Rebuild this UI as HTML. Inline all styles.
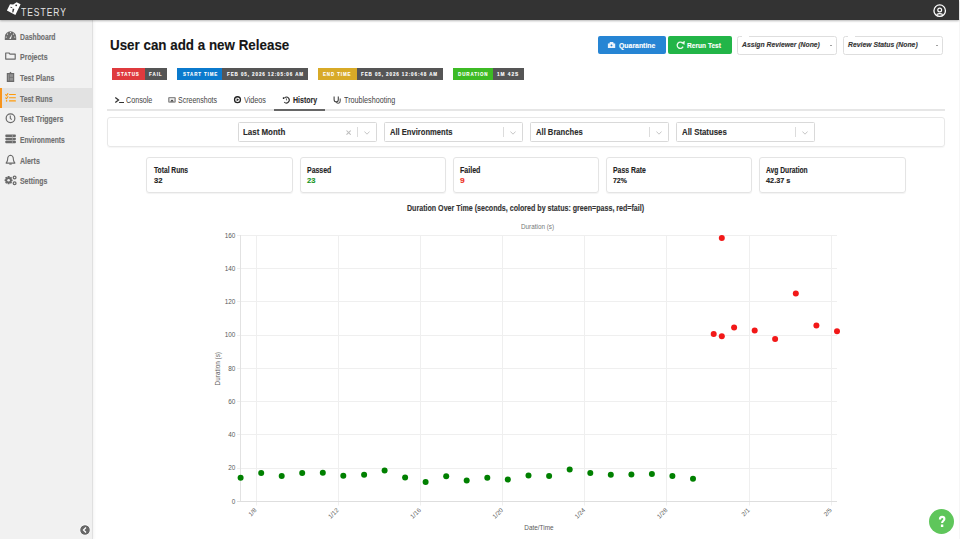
<!DOCTYPE html>
<html><head><meta charset="utf-8">
<style>
*{box-sizing:border-box;margin:0;padding:0}
html,body{width:960px;height:539px;overflow:hidden;background:#fff;font-family:"Liberation Sans",sans-serif;color:#222}
.abs{position:absolute}
.tx{position:absolute;white-space:nowrap;transform-origin:0 0;z-index:4}
#hdr{position:absolute;left:0;top:0;width:959px;height:19.6px;background:#333;box-shadow:0 1px 2px rgba(0,0,0,.28);z-index:2}
#side{position:absolute;left:0;top:19.6px;width:93px;height:520px;background:#f1f1f1;border-right:1px solid #e0e0e0;box-shadow:1px 0 3px rgba(0,0,0,.05)}
.bd{position:absolute;top:67.9px;height:12.2px}
.card{position:absolute;top:157px;width:146.6px;height:36px;border:1px solid #e4e4e4;border-radius:3px;box-shadow:0 1px 1px rgba(0,0,0,.05)}
.sel{position:absolute;top:122px;width:139px;height:20px;border:1px solid #d9d9d9;border-radius:1.5px;background:#fff}
.sel i{position:absolute;top:4.2px;left:118px;width:1px;height:9.6px;background:#dcdcdc}
.sel svg{position:absolute}
.btn{position:absolute;top:36px;height:17.8px;border-radius:2px}
.dd{position:absolute;top:36px;height:18.6px;border:1px solid #dedede;border-radius:2.5px}
.dd b{position:absolute;top:-1px;left:4px;width:7px;height:1px;background:#fff}
.dd s{position:absolute;top:7.5px;width:2.3px;height:1.5px;background:#a0a0a0}
</style></head><body>
<div id="hdr">
  <svg class="abs" style="left:0;top:0" width="24" height="19" viewBox="0 0 24 19"><path d="M6.9 10.6 L10 4.2 L13.2 4.6 L16.6 2.2 L20.6 4.3 L15.4 14.9 Z" fill="#fff"/><path d="M12.7 8.4 L14.3 8.9 L13.3 12.6 L12.2 12.2 Z" fill="#333"/><circle cx="16.2" cy="5.3" r="0.9" fill="#333"/><path d="M10.6 6.7 L12.4 7.2 L11.9 7.9 L10.3 7.5 Z" fill="#333"/></svg>
  <svg class="abs" style="left:929px;top:1px" width="20" height="18" viewBox="0 0 20 18"><circle cx="10.7" cy="9.7" r="5.75" fill="none" stroke="#fff" stroke-width="1.3"/><circle cx="10.7" cy="9" r="1.9" fill="none" stroke="#fff" stroke-width="1.2"/><path d="M7.7 13.6 Q10.7 11.6 13.7 13.6" fill="none" stroke="#fff" stroke-width="1.2"/></svg>
</div>
<div class="abs" style="left:959px;top:19px;width:1px;height:520px;background:#f6f6f6"></div>
<div id="side">
  <div class="abs" style="left:0;top:68px;width:92px;height:20px;background:#e2e2e2"></div>
  <div class="abs" style="left:0;top:68px;width:2px;height:20px;background:#f7941d"></div>
</div>
<svg class="abs" style="left:0;top:19px;z-index:3" width="20" height="170" viewBox="0 19 20 170">
 <g fill="#6a6a6a">
  <path d="M4.8 39.9 L4.8 37 A5.7 5.7 0 0 1 16.2 37 L16.2 39.9 Z"/>
 </g>
 <g fill="#f1f1f1">
  <path d="M9.2 38.7 L12.3 33.9 L10.9 39 Z"/>
  <circle cx="10.5" cy="32.6" r="0.6"/><circle cx="7.5" cy="34.1" r="0.6"/><circle cx="13.5" cy="34.1" r="0.6"/><circle cx="6.2" cy="37.1" r="0.6"/><circle cx="14.8" cy="37.1" r="0.6"/>
 </g>
 <path d="M5.7 53 L9 53 L10 54.1 L15.2 54.1 L15.2 59.1 L5.7 59.1 Z" fill="none" stroke="#6a6a6a" stroke-width="1.2" stroke-linejoin="round"/>
 <path d="M6.8 73 L9.3 73 L10.5 71.8 L11.7 73 L14.2 73 L14.2 81.9 L6.8 81.9 Z" fill="#6a6a6a"/>
 <rect x="7.9" y="74.2" width="5.2" height="6.5" fill="#929292"/><path d="M9.4 74.2 L9.4 80.7 M9.4 77.4 L13.1 77.4" stroke="#6a6a6a" stroke-width="0.7"/>
 <g stroke="#ff9a0a" stroke-width="1.1" fill="none" stroke-linecap="round">
  <path d="M5.6 94.7 L6.5 95.6 L7.9 93.6 M5.6 97.8 L6.5 98.7 L7.9 96.7"/>
  <path d="M9.5 94.5 L15.4 94.5 M9.5 97.7 L15.4 97.7 M9.5 100.9 L15.4 100.9"/>
 </g>
 <circle cx="6.6" cy="100.9" r="0.8" fill="#ff9a0a"/>
 <circle cx="10.5" cy="118.2" r="4.35" fill="none" stroke="#6a6a6a" stroke-width="1.2"/>
 <path d="M10.3 115.6 L10.3 118.3 L11.7 119.7" fill="none" stroke="#6a6a6a" stroke-width="1.1"/>
 <g fill="#6a6a6a"><rect x="5.3" y="134.6" width="10.6" height="2.45" rx="0.8"/><rect x="5.3" y="137.7" width="10.6" height="2.45" rx="0.8"/><rect x="5.3" y="140.8" width="10.6" height="2.45" rx="0.8"/></g>
 <path d="M12.4 134.6 L12.4 143.2" stroke="#aaa" stroke-width="0.7"/>
 <path d="M10.5 155.3 C8 155.6 7.6 157.6 7.6 159.5 C7.6 161.3 6.6 162.3 6.1 163.1 L14.9 163.1 C14.4 162.3 13.4 161.3 13.4 159.5 C13.4 157.6 13 155.6 10.5 155.3 Z" fill="none" stroke="#6a6a6a" stroke-width="1.1" stroke-linejoin="round"/>
 <path d="M9.3 164.1 L11.7 164.1" stroke="#6a6a6a" stroke-width="1.1"/>
 <g transform="translate(8.6 180.2)"><path d="M-0.9 -4.1 L0.9 -4.1 L1.3 -2.8 L2.5 -3.4 L3.5 -2.2 L2.7 -1.1 L4 -0.5 L4 0.9 L2.8 1.3 L3.4 2.5 L2.3 3.5 L1.2 2.8 L0.8 4.1 L-0.8 4.1 L-1.2 2.8 L-2.4 3.5 L-3.5 2.4 L-2.8 1.2 L-4 0.8 L-4 -0.8 L-2.8 -1.2 L-3.5 -2.4 L-2.4 -3.5 L-1.2 -2.8 Z" fill="#6a6a6a"/><circle r="1.3" fill="#f1f1f1"/></g>
 <circle cx="14.6" cy="177.5" r="1.4" fill="none" stroke="#6a6a6a" stroke-width="1.25"/>
 <circle cx="14.6" cy="183.3" r="1.4" fill="none" stroke="#6a6a6a" stroke-width="1.25"/>
</svg>
<svg class="abs" style="left:110px;top:93px;z-index:3" width="240" height="14" viewBox="110 93 240 14">
 <path d="M115.3 97.4 L118.5 99.9 L115.3 102.4" fill="none" stroke="#333" stroke-width="1.3"/>
 <path d="M119.1 102.5 L124 102.5" stroke="#333" stroke-width="1"/>
 <rect x="168.1" y="97" width="7.7" height="5.7" rx="1.2" fill="#8c8c8c"/>
 <rect x="169.5" y="98.2" width="4.9" height="3.3" fill="#eee"/>
 <path d="M170.2 101.5 L172 99.4 L173.8 101.5 Z" fill="#333"/>
 <circle cx="237.5" cy="99.7" r="2.95" fill="none" stroke="#222" stroke-width="1.3"/>
 <path d="M236.6 98.2 L239.1 99.7 L236.6 101.2 Z" fill="#222"/>
 <path d="M284.6 97.7 A2.9 2.9 0 1 1 284.2 102" fill="none" stroke="#333" stroke-width="1.1"/>
 <circle cx="283.6" cy="98.1" r="0.9" fill="#111"/>
 <path d="M286.3 98.3 L286.6 100.4" stroke="#555" stroke-width="0.9"/>
 <path d="M334.1 96.6 L334.1 99.4 C334.1 101 335.3 101.9 336.3 101.9 C337.3 101.9 338.3 101 338.3 99.4 L338.3 96.6" fill="none" stroke="#444" stroke-width="1.1"/>
 <path d="M336.3 101.9 C336.6 103 337.3 103.4 338.3 103.3 C339.6 103.2 340.2 102.3 340.2 101 L340.2 98.5" fill="none" stroke="#555" stroke-width="1.1"/>
</svg>
<svg class="abs" style="left:600px;top:36px;z-index:3" width="90" height="18" viewBox="600 36 90 18">
 <path d="M607.9 43.4 L609.4 43.4 L609.9 42 L613.2 42 L613.7 43.4 L615.2 43.4 L615.2 48 L607.9 48 Z" fill="#eaf3fb"/>
 <path d="M611.5 44.3 L612.6 45.4 L611.5 46.5 L610.4 45.4 Z" fill="#2685d4"/>
 <path d="M682.6 43.2 A3.1 3.1 0 1 0 683.1 46.6" fill="none" stroke="#eafaee" stroke-width="1.3"/>
 <path d="M681 42.6 L684.9 40.9 L684.4 45 Z" fill="#eafaee"/>
</svg>
<svg class="abs" style="left:79px;top:524px" width="12" height="12" viewBox="0 0 12 12"><circle cx="6" cy="6" r="5.3" fill="#666" stroke="#fff" stroke-width="1"/><path d="M7 3.5 L4.5 6 L7 8.5" fill="none" stroke="#fff" stroke-width="1.3"/></svg>


<div class="bd" style="left:112.4px;width:32.3px;background:#df3a3e"></div>
<div class="bd" style="left:144.7px;width:22.3px;background:#555"></div>
<div class="bd" style="left:177.3px;width:45px;background:#0b7acd"></div>
<div class="bd" style="left:222.3px;width:85.5px;background:#555"></div>
<div class="bd" style="left:318.2px;width:38.5px;background:#d8aa27"></div>
<div class="bd" style="left:356.7px;width:86px;background:#555"></div>
<div class="bd" style="left:453.1px;width:39.8px;background:#3dbb25"></div>
<div class="bd" style="left:492.9px;width:30.9px;background:#555"></div>

<div class="btn" style="left:598.3px;width:67.5px;background:#2685d4"></div>
<div class="btn" style="left:667.7px;width:64.2px;background:#22b548"></div>
<div class="dd" style="left:736.6px;width:100px"><b></b><s style="left:92.5px"></s></div>
<div class="dd" style="left:842.5px;width:100.3px"><b></b><s style="left:92.3px"></s></div>

<div class="abs" style="left:107px;top:109px;width:838px;height:2px;background:#e6e6e6"></div>
<div class="abs" style="left:274px;top:109px;width:51px;height:2px;background:#666"></div>

<div class="abs" style="left:107px;top:117.3px;width:838.3px;height:30px;border:1px solid #e8e8e8;border-radius:3px;box-shadow:0 1px 1px rgba(0,0,0,.04)"></div>
<div class="sel" style="left:238px"><i></i><svg style="left:125px;top:7.6px" width="6" height="4" viewBox="0 0 6 4"><path d="M0.4 0.5 L3 3.2 L5.6 0.5" fill="none" stroke="#c6c6c6" stroke-width="1"/></svg><svg style="left:106.8px;top:6.6px" width="5.2" height="5.2" viewBox="0 0 5.2 5.2"><path d="M0.5 0.5 L4.7 4.7 M4.7 0.5 L0.5 4.7" stroke="#bdbdbd" stroke-width="1.05"/></svg></div>
<div class="sel" style="left:384px"><i></i><svg style="left:125px;top:7.6px" width="6" height="4" viewBox="0 0 6 4"><path d="M0.4 0.5 L3 3.2 L5.6 0.5" fill="none" stroke="#c6c6c6" stroke-width="1"/></svg></div>
<div class="sel" style="left:530px"><i></i><svg style="left:125px;top:7.6px" width="6" height="4" viewBox="0 0 6 4"><path d="M0.4 0.5 L3 3.2 L5.6 0.5" fill="none" stroke="#c6c6c6" stroke-width="1"/></svg></div>
<div class="sel" style="left:676px"><i></i><svg style="left:125px;top:7.6px" width="6" height="4" viewBox="0 0 6 4"><path d="M0.4 0.5 L3 3.2 L5.6 0.5" fill="none" stroke="#c6c6c6" stroke-width="1"/></svg></div>

<div class="card" style="left:146.4px"></div>
<div class="card" style="left:299.5px"></div>
<div class="card" style="left:452.6px"></div>
<div class="card" style="left:605.8px"></div>
<div class="card" style="left:759.0px"></div>

<!--CHART-->
<svg class="abs" style="left:0;top:0" width="960" height="539" viewBox="0 0 960 539">
<line x1="237" y1="501.5" x2="837.0" y2="501.5" stroke="#efefef" stroke-width="1"/>
<line x1="237" y1="468.5" x2="837.0" y2="468.5" stroke="#efefef" stroke-width="1"/>
<line x1="237" y1="434.5" x2="837.0" y2="434.5" stroke="#efefef" stroke-width="1"/>
<line x1="237" y1="401.5" x2="837.0" y2="401.5" stroke="#efefef" stroke-width="1"/>
<line x1="237" y1="368.5" x2="837.0" y2="368.5" stroke="#efefef" stroke-width="1"/>
<line x1="237" y1="335.5" x2="837.0" y2="335.5" stroke="#efefef" stroke-width="1"/>
<line x1="237" y1="301.5" x2="837.0" y2="301.5" stroke="#efefef" stroke-width="1"/>
<line x1="237" y1="268.5" x2="837.0" y2="268.5" stroke="#efefef" stroke-width="1"/>
<line x1="237" y1="235.5" x2="837.0" y2="235.5" stroke="#efefef" stroke-width="1"/>
<line x1="256.5" y1="235.4" x2="256.5" y2="505.5" stroke="#efefef" stroke-width="1"/>
<line x1="338.5" y1="235.4" x2="338.5" y2="505.5" stroke="#efefef" stroke-width="1"/>
<line x1="420.5" y1="235.4" x2="420.5" y2="505.5" stroke="#efefef" stroke-width="1"/>
<line x1="502.5" y1="235.4" x2="502.5" y2="505.5" stroke="#efefef" stroke-width="1"/>
<line x1="584.5" y1="235.4" x2="584.5" y2="505.5" stroke="#efefef" stroke-width="1"/>
<line x1="666.5" y1="235.4" x2="666.5" y2="505.5" stroke="#efefef" stroke-width="1"/>
<line x1="749.5" y1="235.4" x2="749.5" y2="505.5" stroke="#efefef" stroke-width="1"/>
<line x1="831.5" y1="235.4" x2="831.5" y2="505.5" stroke="#efefef" stroke-width="1"/>
<line x1="240.5" y1="235" x2="240.5" y2="501.5" stroke="#e2e2e2" stroke-width="1"/>
<line x1="237" y1="501.5" x2="837.0" y2="501.5" stroke="#dedede" stroke-width="1"/>
<text x="235.3" y="503.60" text-anchor="end" font-size="6.4" fill="#5a5a5a">0</text>
<text x="235.3" y="470.36" text-anchor="end" font-size="6.4" fill="#5a5a5a">20</text>
<text x="235.3" y="437.13" text-anchor="end" font-size="6.4" fill="#5a5a5a">40</text>
<text x="235.3" y="403.89" text-anchor="end" font-size="6.4" fill="#5a5a5a">60</text>
<text x="235.3" y="370.65" text-anchor="end" font-size="6.4" fill="#5a5a5a">80</text>
<text x="235.3" y="337.41" text-anchor="end" font-size="6.4" fill="#5a5a5a">100</text>
<text x="235.3" y="304.18" text-anchor="end" font-size="6.4" fill="#5a5a5a">120</text>
<text x="235.3" y="270.94" text-anchor="end" font-size="6.4" fill="#5a5a5a">140</text>
<text x="235.3" y="237.70" text-anchor="end" font-size="6.4" fill="#5a5a5a">160</text>
<text transform="translate(257.00,510.6) rotate(-45)" text-anchor="end" font-size="6.2" fill="#5a5a5a">1/8</text>
<text transform="translate(339.18,510.6) rotate(-45)" text-anchor="end" font-size="6.2" fill="#5a5a5a">1/12</text>
<text transform="translate(421.36,510.6) rotate(-45)" text-anchor="end" font-size="6.2" fill="#5a5a5a">1/16</text>
<text transform="translate(503.54,510.6) rotate(-45)" text-anchor="end" font-size="6.2" fill="#5a5a5a">1/20</text>
<text transform="translate(585.72,510.6) rotate(-45)" text-anchor="end" font-size="6.2" fill="#5a5a5a">1/24</text>
<text transform="translate(667.90,510.6) rotate(-45)" text-anchor="end" font-size="6.2" fill="#5a5a5a">1/28</text>
<text transform="translate(750.08,510.6) rotate(-45)" text-anchor="end" font-size="6.2" fill="#5a5a5a">2/1</text>
<text transform="translate(832.26,510.6) rotate(-45)" text-anchor="end" font-size="6.2" fill="#5a5a5a">2/5</text>
<text transform="translate(220.3,368.7) rotate(-90)" text-anchor="middle" font-size="6.4" fill="#5a5a5a">Duration (s)</text>
<text x="538.9" y="530" text-anchor="middle" font-size="6.4" fill="#5a5a5a">Date/Time</text>
<circle cx="240.6" cy="477.7" r="3" fill="#008000"/>
<circle cx="261.2" cy="472.9" r="3" fill="#008000"/>
<circle cx="281.7" cy="476.1" r="3" fill="#008000"/>
<circle cx="302.2" cy="473.1" r="3" fill="#008000"/>
<circle cx="322.8" cy="472.7" r="3" fill="#008000"/>
<circle cx="343.3" cy="475.7" r="3" fill="#008000"/>
<circle cx="364.1" cy="474.8" r="3" fill="#008000"/>
<circle cx="384.6" cy="470.6" r="3" fill="#008000"/>
<circle cx="405.1" cy="477.5" r="3" fill="#008000"/>
<circle cx="425.6" cy="481.9" r="3" fill="#008000"/>
<circle cx="446.2" cy="476.3" r="3" fill="#008000"/>
<circle cx="466.7" cy="480.5" r="3" fill="#008000"/>
<circle cx="487.3" cy="477.8" r="3" fill="#008000"/>
<circle cx="507.8" cy="479.6" r="3" fill="#008000"/>
<circle cx="528.5" cy="475.5" r="3" fill="#008000"/>
<circle cx="549.1" cy="475.9" r="3" fill="#008000"/>
<circle cx="569.7" cy="469.5" r="3" fill="#008000"/>
<circle cx="590.3" cy="472.9" r="3" fill="#008000"/>
<circle cx="610.8" cy="474.7" r="3" fill="#008000"/>
<circle cx="631.4" cy="474.5" r="3" fill="#008000"/>
<circle cx="651.9" cy="474.1" r="3" fill="#008000"/>
<circle cx="672.4" cy="476.1" r="3" fill="#008000"/>
<circle cx="693.0" cy="478.7" r="3" fill="#008000"/>
<circle cx="713.7" cy="334.0" r="3" fill="#f21818"/>
<circle cx="721.8" cy="336.3" r="3" fill="#f21818"/>
<circle cx="721.8" cy="238.0" r="3" fill="#f21818"/>
<circle cx="734.1" cy="327.5" r="3" fill="#f21818"/>
<circle cx="754.7" cy="330.5" r="3" fill="#f21818"/>
<circle cx="775.1" cy="339.1" r="3" fill="#f21818"/>
<circle cx="795.8" cy="293.4" r="3" fill="#f21818"/>
<circle cx="816.4" cy="325.4" r="3" fill="#f21818"/>
<circle cx="837.0" cy="331.2" r="3" fill="#f21818"/>
</svg>
<!--/CHART-->

<svg class="abs" style="left:929.3px;top:508.5px" width="25" height="25" viewBox="0 0 25 25"><circle cx="12.5" cy="12.5" r="12.5" fill="#5fc65b"/></svg>
<!--TEXT-->
<div class="tx" style="left:19.56px;top:33.62px;font-size:8.15px;line-height:8.15px;font-weight:bold;font-style:normal;color:#6f6f6f;-webkit-text-stroke:0.12px currentColor;transform:scaleX(0.837);">Dashboard</div>
<div class="tx" style="left:19.54px;top:54.27px;font-size:8.15px;line-height:8.15px;font-weight:bold;font-style:normal;color:#6f6f6f;-webkit-text-stroke:0.12px currentColor;transform:scaleX(0.860);">Projects</div>
<div class="tx" style="left:19.93px;top:74.92px;font-size:8.15px;line-height:8.15px;font-weight:bold;font-style:normal;color:#6f6f6f;-webkit-text-stroke:0.12px currentColor;transform:scaleX(0.856);">Test Plans</div>
<div class="tx" style="left:19.93px;top:95.57px;font-size:8.15px;line-height:8.15px;font-weight:bold;font-style:normal;color:#6f6f6f;-webkit-text-stroke:0.12px currentColor;transform:scaleX(0.839);">Test Runs</div>
<div class="tx" style="left:19.93px;top:116.22px;font-size:8.15px;line-height:8.15px;font-weight:bold;font-style:normal;color:#6f6f6f;-webkit-text-stroke:0.12px currentColor;transform:scaleX(0.860);">Test Triggers</div>
<div class="tx" style="left:19.56px;top:136.87px;font-size:8.15px;line-height:8.15px;font-weight:bold;font-style:normal;color:#6f6f6f;-webkit-text-stroke:0.12px currentColor;transform:scaleX(0.825);">Environments</div>
<div class="tx" style="left:19.82px;top:157.52px;font-size:8.15px;line-height:8.15px;font-weight:bold;font-style:normal;color:#6f6f6f;-webkit-text-stroke:0.12px currentColor;transform:scaleX(0.860);">Alerts</div>
<div class="tx" style="left:19.79px;top:178.17px;font-size:8.15px;line-height:8.15px;font-weight:bold;font-style:normal;color:#6f6f6f;-webkit-text-stroke:0.12px currentColor;transform:scaleX(0.852);">Settings</div>
<div class="tx" style="left:117.26px;top:72.25px;font-size:5.38px;line-height:5.38px;font-weight:bold;font-style:normal;color:#fff;letter-spacing:0.2em;-webkit-text-stroke:0.12px currentColor;transform:scaleX(0.839);">STATUS</div>
<div class="tx" style="left:149.40px;top:72.25px;font-size:5.38px;line-height:5.38px;font-weight:bold;font-style:normal;color:#fff;letter-spacing:0.2em;-webkit-text-stroke:0.12px currentColor;transform:scaleX(0.849);">FAIL</div>
<div class="tx" style="left:182.57px;top:72.25px;font-size:5.38px;line-height:5.38px;font-weight:bold;font-style:normal;color:#fff;letter-spacing:0.2em;-webkit-text-stroke:0.12px currentColor;transform:scaleX(0.825);">START TIME</div>
<div class="tx" style="left:227.01px;top:72.25px;font-size:5.38px;line-height:5.38px;font-weight:bold;font-style:normal;color:#fff;letter-spacing:0.2em;-webkit-text-stroke:0.12px currentColor;transform:scaleX(0.840);">FEB 05, 2026 12:05:06 AM</div>
<div class="tx" style="left:323.46px;top:72.25px;font-size:5.38px;line-height:5.38px;font-weight:bold;font-style:normal;color:#fff;letter-spacing:0.2em;-webkit-text-stroke:0.12px currentColor;transform:scaleX(0.827);">END TIME</div>
<div class="tx" style="left:361.41px;top:72.25px;font-size:5.38px;line-height:5.38px;font-weight:bold;font-style:normal;color:#fff;letter-spacing:0.2em;-webkit-text-stroke:0.12px currentColor;transform:scaleX(0.840);">FEB 05, 2026 12:06:48 AM</div>
<div class="tx" style="left:457.61px;top:72.25px;font-size:5.38px;line-height:5.38px;font-weight:bold;font-style:normal;color:#fff;letter-spacing:0.2em;-webkit-text-stroke:0.12px currentColor;transform:scaleX(0.833);">DURATION</div>
<div class="tx" style="left:497.19px;top:72.25px;font-size:5.38px;line-height:5.38px;font-weight:bold;font-style:normal;color:#fff;letter-spacing:0.2em;-webkit-text-stroke:0.12px currentColor;transform:scaleX(0.891);">1M 42S</div>
<div class="tx" style="left:125.74px;top:96.13px;font-size:8.73px;line-height:8.73px;font-weight:normal;font-style:normal;color:#444;transform:scaleX(0.822);">Console</div>
<div class="tx" style="left:178.43px;top:96.13px;font-size:8.73px;line-height:8.73px;font-weight:normal;font-style:normal;color:#444;transform:scaleX(0.805);">Screenshots</div>
<div class="tx" style="left:243.96px;top:96.13px;font-size:8.73px;line-height:8.73px;font-weight:normal;font-style:normal;color:#444;transform:scaleX(0.825);">Videos</div>
<div class="tx" style="left:292.64px;top:96.13px;font-size:8.73px;line-height:8.73px;font-weight:bold;font-style:normal;color:#2a2a2a;-webkit-text-stroke:0.12px currentColor;transform:scaleX(0.803);">History</div>
<div class="tx" style="left:344.02px;top:96.13px;font-size:8.73px;line-height:8.73px;font-weight:normal;font-style:normal;color:#444;transform:scaleX(0.825);">Troubleshooting</div>
<div class="tx" style="left:618.82px;top:41.77px;font-size:7.78px;line-height:7.78px;font-weight:bold;font-style:normal;color:#fff;-webkit-text-stroke:0.12px currentColor;transform:scaleX(0.886);">Quarantine</div>
<div class="tx" style="left:687.37px;top:42.02px;font-size:7.49px;line-height:7.49px;font-weight:bold;font-style:normal;color:#fff;-webkit-text-stroke:0.12px currentColor;transform:scaleX(0.881);">Rerun Test</div>
<div class="tx" style="left:741.74px;top:40.60px;font-size:7.27px;line-height:7.27px;font-weight:bold;font-style:italic;color:#333;-webkit-text-stroke:0.12px currentColor;transform:scaleX(0.936);">Assign Reviewer (None)</div>
<div class="tx" style="left:847.66px;top:40.60px;font-size:7.27px;line-height:7.27px;font-weight:bold;font-style:italic;color:#333;-webkit-text-stroke:0.12px currentColor;transform:scaleX(0.938);">Review Status (None)</div>
<div class="tx" style="left:243.08px;top:127.99px;font-size:8.65px;line-height:8.65px;font-weight:bold;font-style:normal;color:#2b2b2b;-webkit-text-stroke:0.12px currentColor;transform:scaleX(0.919);">Last Month</div>
<div class="tx" style="left:389.81px;top:127.99px;font-size:8.65px;line-height:8.65px;font-weight:bold;font-style:normal;color:#2b2b2b;-webkit-text-stroke:0.12px currentColor;transform:scaleX(0.880);">All Environments</div>
<div class="tx" style="left:535.71px;top:127.99px;font-size:8.65px;line-height:8.65px;font-weight:bold;font-style:normal;color:#2b2b2b;-webkit-text-stroke:0.12px currentColor;transform:scaleX(0.885);">All Branches</div>
<div class="tx" style="left:681.70px;top:127.99px;font-size:8.65px;line-height:8.65px;font-weight:bold;font-style:normal;color:#2b2b2b;-webkit-text-stroke:0.12px currentColor;transform:scaleX(0.907);">All Statuses</div>
<div class="tx" style="left:154.18px;top:165.79px;font-size:8.29px;line-height:8.29px;font-weight:bold;font-style:normal;color:#222;-webkit-text-stroke:0.12px currentColor;transform:scaleX(0.808);">Total Runs</div>
<div class="tx" style="left:154.06px;top:176.65px;font-size:7.27px;line-height:7.27px;font-weight:bold;font-style:normal;color:#222;-webkit-text-stroke:0.12px currentColor;transform:scaleX(1.046);">32</div>
<div class="tx" style="left:306.80px;top:165.79px;font-size:8.29px;line-height:8.29px;font-weight:bold;font-style:normal;color:#222;-webkit-text-stroke:0.12px currentColor;transform:scaleX(0.839);">Passed</div>
<div class="tx" style="left:306.99px;top:176.65px;font-size:7.27px;line-height:7.27px;font-weight:bold;font-style:normal;color:#1a961f;-webkit-text-stroke:0.12px currentColor;transform:scaleX(1.038);">23</div>
<div class="tx" style="left:459.79px;top:165.79px;font-size:8.29px;line-height:8.29px;font-weight:bold;font-style:normal;color:#222;-webkit-text-stroke:0.12px currentColor;transform:scaleX(0.852);">Failed</div>
<div class="tx" style="left:459.96px;top:176.65px;font-size:7.27px;line-height:7.27px;font-weight:bold;font-style:normal;color:#ee3024;-webkit-text-stroke:0.12px currentColor;transform:scaleX(1.148);">9</div>
<div class="tx" style="left:613.15px;top:165.79px;font-size:8.29px;line-height:8.29px;font-weight:bold;font-style:normal;color:#222;-webkit-text-stroke:0.12px currentColor;transform:scaleX(0.829);">Pass Rate</div>
<div class="tx" style="left:613.29px;top:176.65px;font-size:7.27px;line-height:7.27px;font-weight:bold;font-style:normal;color:#222;-webkit-text-stroke:0.12px currentColor;transform:scaleX(0.955);">72%</div>
<div class="tx" style="left:766.43px;top:165.79px;font-size:8.29px;line-height:8.29px;font-weight:bold;font-style:normal;color:#222;-webkit-text-stroke:0.12px currentColor;transform:scaleX(0.807);">Avg Duration</div>
<div class="tx" style="left:766.49px;top:176.65px;font-size:7.27px;line-height:7.27px;font-weight:bold;font-style:normal;color:#222;-webkit-text-stroke:0.12px currentColor;transform:scaleX(1.006);">42.37 s</div>
<div class="tx" style="left:407.44px;top:203.97px;font-size:8.44px;line-height:8.44px;font-weight:bold;font-style:normal;color:#333;-webkit-text-stroke:0.12px currentColor;transform:scaleX(0.842);">Duration Over Time (seconds, colored by status: green=pass, red=fail)</div>
<div class="tx" style="left:521.39px;top:222.75px;font-size:7.27px;line-height:7.27px;font-weight:normal;font-style:normal;color:#777;transform:scaleX(0.872);">Duration (s)</div>
<div class="tx" style="left:110.30px;top:38.01px;font-size:14.55px;line-height:14.55px;font-weight:bold;font-style:normal;color:#161616;-webkit-text-stroke:0.12px currentColor;transform:scaleX(0.920);">User can add a new Release</div>
<div class="tx" style="left:21.29px;top:6.91px;font-size:11.35px;line-height:11.35px;font-weight:normal;font-style:normal;color:#e6e6e6;letter-spacing:0.12em;transform:scaleX(0.745);">TESTERY</div>
<!--/TEXT-->
<svg class="abs" style="left:0;top:0;z-index:4" width="960" height="539" viewBox="0 0 960 539"><path d="M939.9 519.6 C939.9 517.7 941 516.9 942.1 516.9 C943.5 516.9 944.4 517.9 944.4 519 C944.4 520.7 942.1 520.9 942.1 523" fill="none" stroke="#fff" stroke-width="2.1"/><rect x="940.9" y="524.5" width="2.4" height="2.5" fill="#fff"/></svg>
</body></html>
